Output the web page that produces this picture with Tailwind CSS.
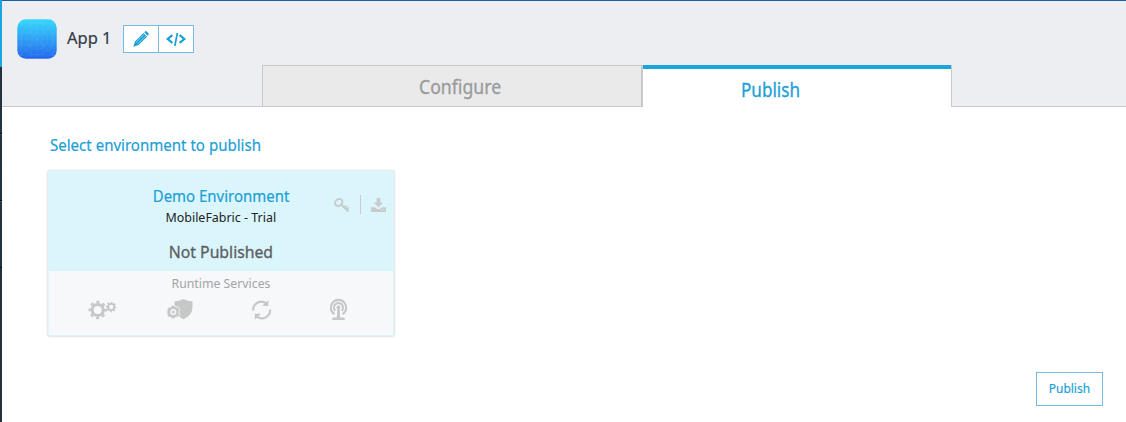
<!DOCTYPE html>
<html lang="en">
<head>
<meta charset="utf-8">
<title>App 1 - Publish</title>
<script src="https://cdn.jsdelivr.net/npm/@tailwindcss/browser@4"></script>
</head>
<body class="w-[1126px] h-[422px] overflow-hidden bg-white flex font-['Noto_Sans',sans-serif]">
<aside class="w-[2px] h-[422px] shrink-0 flex flex-col bg-[#25303b]">
  <div class="h-[67px] bg-[#1aa6dd]"></div>
  <div class="h-[67px] border-b border-[#050a10] bg-linear-to-b from-[#27313c] to-[#1f3444]"></div>
  <div class="h-[67px] border-t border-b border-t-[#46505a] border-b-[#050a10] bg-linear-to-b from-[#27313c] to-[#1f3444]"></div>
  <div class="h-[67px] border-t border-b border-t-[#46505a] border-b-[#050a10] bg-linear-to-b from-[#27313c] to-[#1f3444]"></div>
</aside>
<div class="flex-1 flex flex-col">
  <header class="h-[107px] shrink-0 bg-[#edeef2] border-t border-t-[#1b5faa] flex flex-col">
    <div class="h-[64px] shrink-0 pl-[15px] pt-[18px] flex items-start">
      <svg class="w-10 h-10 shrink-0" viewBox="0 0 40 40">
        <defs><linearGradient id="g" x1="0" y1="0" x2="0" y2="1"><stop offset="0" stop-color="#36d8fb"/><stop offset="1" stop-color="#2467ee"/></linearGradient></defs>
        <rect x=".3" y=".3" width="39.4" height="39.4" rx="8.5" fill="url(#g)"/>
        <g fill="none" stroke="#fff" stroke-opacity=".1" stroke-width=".6"><circle cx="20" cy="20" r="16"/><circle cx="20" cy="20" r="10.5"/><circle cx="20" cy="20" r="5"/><path d="M2 2l36 36M38 2L2 38M20 0v40M0 20h40M4 0v40M36 0v40M0 4h40M0 36h40M14 0v40M26 0v40M0 14h40M0 26h40"/></g>
      </svg>
      <h1 class="ml-[10px] w-[56px] h-[40px] leading-[37px] text-[17px] text-[#333b46] whitespace-nowrap origin-left scale-x-[.97] [-webkit-text-stroke:0.2px]">App 1</h1>
      <div class="mt-[6px] flex w-[71px] h-[28px] border border-[#76bce1] bg-white">
        <div class="w-[35px] border-r border-[#76bce1]">
          <svg class="w-[34px] h-[26px]" viewBox="0 0 34 26"><path fill="#1b9fd6" d="M9.3 20.8l1.7-5.3 8.4-8.4 3.6 3.6-8.4 8.4zM20.2 6.3l.9-.9q.8-.6 1.6.1l1.800 1.800q.6.8 0 1.6l-.9.9z"/><path fill="none" stroke="#fff" stroke-opacity=".65" stroke-width=".8" d="M12.2 16.2l7.6-7.6M13.8 17.8l7.600-7.600"/></svg>
        </div>
        <svg class="w-[34px] h-[26px]" viewBox="0 0 34 26"><path fill="none" stroke="#1b9fd6" stroke-width="2.200" d="M13.400 9.200L8.700 13l4.700 3.800M20.600 9.200l4.700 3.800-4.700 3.800"/><path fill="none" stroke="#1b9fd6" stroke-width="1.700" d="M18.400 6.800L15.800 20"/></svg>
      </div>
    </div>
    <nav class="flex h-[42px]">
      <div class="w-[260px] border-b border-[#c8c9cc]"></div>
      <div class="w-[381px] border border-r-2 border-[#c8c8c8] bg-[#eaeaea] flex pl-[156px] pt-[7px]"><span class="block h-7 leading-7 text-[19px] text-[#9b9b9b] whitespace-nowrap origin-left scale-x-[.93] [-webkit-text-stroke:0.3px]">Configure</span></div>
      <div class="w-[309px] border-r border-r-[#c8c8c8] bg-white"><div class="h-[4px] w-[308px] bg-[#1aa6dc]"></div><span class="block ml-[98px] pt-[7px] leading-7 text-[19px] text-[#1b9fd6] whitespace-nowrap origin-left scale-x-[.9] [-webkit-text-stroke:0.3px]">Publish</span></div>
      <div class="flex-1 border-b border-[#c8c9cc]"></div>
    </nav>
  </header>
  <main class="flex-1 flex flex-col">
    <h2 class="mt-[26px] ml-[48px] h-6 leading-6 text-[16px] text-[#1b9fd6] whitespace-nowrap origin-left scale-x-[.94] [-webkit-text-stroke:0.2px]">Select environment to publish</h2>
    <section class="mt-[14px] ml-[46px] w-[346px] h-[165px] shrink-0 rounded-[2px] bg-[#dbf5fd] shadow-[0_0_2px_1px_#e2e2e2] flex flex-col">
      <div class="h-[100px] flex">
        <div class="w-[104px]"></div>
        <div class="w-[138px] shrink-0 flex flex-col items-center text-center whitespace-nowrap">
          <div class="mt-[13px] h-6 leading-6 text-[16px] text-[#1b9fd6] scale-x-[.935] [-webkit-text-stroke:0.2px]">Demo Environment</div>
          <div class="-mt-px h-5 leading-5 text-[13px] text-[#222] scale-x-[.957]">MobileFabric - Trial</div>
          <div class="mt-[13px] h-6 leading-6 text-[16px] text-[#5c5f61] scale-x-[.985] [-webkit-text-stroke:0.3px]">Not Published</div>
        </div>
        <div class="flex-1 flex items-start pt-[24px] pl-[44px]">
          <svg class="w-[16px] h-[18px]" viewBox="0 0 16 18"><g fill="none" stroke="#c9cbcb" stroke-width="2"><ellipse cx="4.700" cy="7.500" rx="4" ry="3.200" transform="rotate(-40 4.700 7.500)"/><path d="M7.400 9.800l7 6.700M10.500 12.600l1.900-1.900M12.600 14.700l2.200-2.200"/></g></svg>
          <div class="ml-[10px] w-px h-[19px] bg-[#c9cbcb]"></div>
          <svg class="ml-[10px] w-[15px] h-[18px]" viewBox="0 0 15 18"><path fill="#c9cbcb" d="M5.700 3h3.600v4.400h3L7.500 12.200 2.700 7.400h3zM0 12.300h4l2 1.700h3l2-1.700h4V16q0 .9-.9.9H.9Q0 16.900 0 16z"/><path stroke="#dbf5fd" stroke-width="1" d="M10.500 14.900h1M12.500 14.900h1"/></svg>
        </div>
      </div>
      <div class="ml-[1px] w-[344px] h-[64px] bg-[#f6f8fa] flex flex-col">
        <div class="h-6 leading-6 text-center text-[13px] text-[#a2a4a5] whitespace-nowrap scale-x-[.945]">Runtime Services</div>
        <div class="flex h-[40px]">
          <svg class="ml-[39px] mt-[3px] w-[30px] h-[24px]" viewBox="0 0 30 24"><g fill="none" stroke="#c6c8c8"><circle cx="9.700" cy="12" r="5.600" stroke-width="3"/><circle cx="9.700" cy="12" r="8" stroke-width="2.400" stroke-dasharray="3 3.283" stroke-dashoffset="1.500"/><circle cx="23.200" cy="9" r="3.100" stroke-width="1.900"/><circle cx="23.200" cy="9" r="4.500" stroke-width="1.500" stroke-dasharray="1.700 1.834" stroke-dashoffset=".85"/></g></svg>
          <svg class="ml-[49px] mt-[3px] w-[28px] h-[24px]" viewBox="0 0 28 24"><path fill="#c6c8c8" d="M7.500 3.300Q12.500 3.200 16.500 1q4 2.200 9 2.300v6q0 8-9 12-9-4-9-12z"/><path fill="#c6c8c8" stroke="#f6f8fa" stroke-width=".8" d="M4.600 7.300h3.200l.9 1.700 2.300-.1 2 3-1.200 2.100 1.200 2.200-2 3-2.300-.1-.9 1.700H4.600l-.9-1.700-2.300.1-1.400-3V12l1.400-3 2.300.1z"/><circle cx="6.300" cy="14" r="2.300" fill="none" stroke="#f6f8fa" stroke-width="1.500"/></svg>
          <svg class="ml-[55px] mt-[3px] w-[22px] h-[24px]" viewBox="0 0 22 24"><g fill="none" stroke="#c6c8c8" stroke-width="2.100"><path d="M3.100 12.500A8.200 8.200 0 0 1 16.300 5.500M20.100 11.600A8.200 8.200 0 0 1 6.900 18.600"/></g><path fill="#c6c8c8" d="M18.400 2v6h-6.300zM4.800 15.800h6.200L4.900 21.800z"/></svg>
          <svg class="ml-[57px] mt-[3px] w-[20px] h-[24px]" viewBox="0 0 20 24"><g fill="none" stroke="#c6c8c8" stroke-width="2.100"><path d="M5.500 16.200A7.700 7.700 0 1 1 13.500 16.200"/><path d="M6.300 12.700A4.500 4.500 0 1 1 12.700 12.700"/></g><path fill="#c6c8c8" d="M9.500 7.500a2 2 0 0 1 1.200 3.600l.5 8.400h3.600q.9 0 .9 1V22H3.300v-1.500q0-1 .9-1h3.600l.5-8.400A2 2 0 0 1 9.500 7.500z"/></svg>
        </div>
      </div>
    </section>
    <div class="mt-[36px] pr-[23px] flex justify-end">
      <button class="w-[67px] h-[34px] border border-[#76bce1] bg-white text-[13px] text-[#1b9fd6] leading-[30px] pb-[2px] flex justify-center"><span class="block scale-x-[.92] [-webkit-text-stroke:0.2px]">Publish</span></button>
    </div>
  </main>
</div>
</body>
</html>
